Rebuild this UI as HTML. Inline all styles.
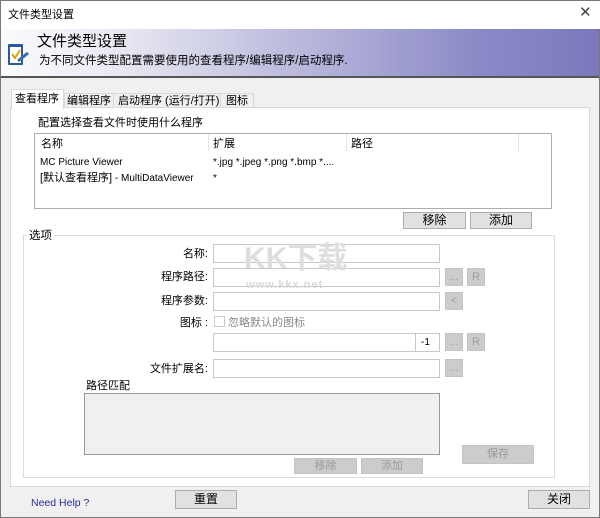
<!DOCTYPE html><html><head><meta charset="utf-8"><style>
*{margin:0;padding:0;box-sizing:border-box}
body{width:600px;height:518px;background:#f0f0f0;font-family:"Liberation Sans","Noto Sans CJK SC",sans-serif;font-size:11px;color:#000;position:relative;overflow:hidden;border:1px solid #777}
.a{position:absolute}
.t{position:absolute;white-space:nowrap;line-height:12px}
.in{position:absolute;background:#fff;border:1px solid #c8c8c8;height:19px}
.b{position:absolute;background:#e1e1e1;border:1px solid #adadad;text-align:center;line-height:15px;font-size:12px}
.d{position:absolute;background:#cccccc;border:1px solid #c4c4c4;color:#9a9a9a;text-align:center;line-height:16px;font-size:11px}
</style></head><body>
<div class="a" style="left:0;top:0;width:600px;height:28px;background:#fff"></div>
<div class="t" style="left:7px;top:8px;font-size:11px">文件类型设置</div>
<div class="t" style="left:578px;top:6px;font-size:15px;color:#444;font-weight:normal">✕</div>
<div class="a" style="left:0;top:28px;width:598px;height:49px;background:linear-gradient(90deg,#fbfbfd 0%,#e8e8f2 20%,#b9b8dc 50%,#8b89c6 80%,#7b79bc 100%);border-bottom:2px solid #555"></div>
<svg class="a" style="left:5px;top:40px" width="26" height="28" viewBox="0 0 26 28"><rect x="2" y="3" width="15" height="21" rx="1" fill="#2a5a9a"/><rect x="4" y="6" width="11" height="16" fill="#fff"/><path d="M6 13l3 4 5-8" stroke="#e0a000" stroke-width="2" fill="none"/><path d="M12 20l10-8" stroke="#3a6ab0" stroke-width="3"/></svg>
<div class="t" style="left:36px;top:33px;font-size:15px;line-height:16px">文件类型设置</div>
<div class="t" style="left:38px;top:54px;font-size:11.5px">为不同文件类型配置需要使用的查看程序/编辑程序/启动程序.</div>
<div class="a" style="left:9px;top:106px;width:580px;height:380px;background:#fff;border:1px solid #d9d9d9"></div>
<div class="a" style="left:63px;top:92px;width:50px;height:15px;border:1px solid #d9d9d9;border-bottom:none"></div>
<div class="a" style="left:113px;top:92px;width:107px;height:15px;border:1px solid #d9d9d9;border-bottom:none;border-left:none"></div>
<div class="a" style="left:220px;top:92px;width:33px;height:15px;border:1px solid #d9d9d9;border-bottom:none;border-left:none"></div>
<div class="a" style="left:10px;top:88px;width:53px;height:20px;background:#fff;border:1px solid #d9d9d9;border-bottom:none"></div>
<div class="t" style="left:14px;top:92px;font-size:11px">查看程序</div>
<div class="t" style="left:66px;top:94px;font-size:11px">编辑程序</div>
<div class="t" style="left:117px;top:94px;font-size:11px">启动程序 (运行/打开)</div>
<div class="t" style="left:225px;top:94px;font-size:11px">图标</div>
<div class="t" style="left:37px;top:116px">配置选择查看文件时使用什么程序</div>
<div class="a" style="left:33px;top:132px;width:518px;height:76px;background:#fff;border:1px solid #adadad"></div>
<div class="a" style="left:207px;top:133px;width:1px;height:17px;background:#e5e5e5"></div>
<div class="a" style="left:345px;top:133px;width:1px;height:17px;background:#e5e5e5"></div>
<div class="a" style="left:517px;top:133px;width:1px;height:17px;background:#e5e5e5"></div>
<div class="t" style="left:40px;top:137px">名称</div>
<div class="t" style="left:212px;top:137px">扩展</div>
<div class="t" style="left:350px;top:137px">路径</div>
<div class="t" style="left:39px;top:156px;font-size:10px">MC Picture Viewer</div>
<div class="t" style="left:39px;top:171px;font-size:10px"><span style="font-size:11px">[默认查看程序]</span> - MultiDataViewer</div>
<div class="t" style="left:212px;top:156px;font-size:10px">*.jpg *.jpeg *.png *.bmp *....</div>
<div class="t" style="left:212px;top:172px;font-size:10px">*</div>
<div class="b" style="left:402px;top:211px;width:63px;height:17px">移除</div>
<div class="b" style="left:469px;top:211px;width:62px;height:17px">添加</div>
<div class="a" style="left:22px;top:234px;width:532px;height:243px;border:1px solid #dcdcdc"></div>
<div class="t" style="left:26px;top:229px;background:#fff;padding:0 2px;font-size:11.5px">选项</div>
<div class="t" style="left:150px;top:247px;width:57px;text-align:right">名称:</div>
<div class="t" style="left:130px;top:270px;width:77px;text-align:right">程序路径:</div>
<div class="t" style="left:130px;top:294px;width:77px;text-align:right">程序参数:</div>
<div class="t" style="left:150px;top:316px;width:57px;text-align:right">图标 :</div>
<div class="t" style="left:130px;top:362px;width:77px;text-align:right">文件扩展名:</div>
<div class="in" style="left:212px;top:243px;width:227px"></div>
<div class="in" style="left:212px;top:267px;width:227px"></div>
<div class="in" style="left:212px;top:291px;width:227px"></div>
<div class="in" style="left:212px;top:332px;width:203px"></div>
<div class="in" style="left:414px;top:332px;width:25px"><span style="position:absolute;left:5px;top:3px;font-size:10px">-1</span></div>
<div class="in" style="left:212px;top:358px;width:227px"></div>
<div class="d" style="left:444px;top:267px;width:18px;height:18px">...</div>
<div class="d" style="left:466px;top:267px;width:18px;height:18px">R</div>
<div class="d" style="left:444px;top:291px;width:18px;height:18px">&lt;</div>
<div class="d" style="left:444px;top:332px;width:18px;height:18px">...</div>
<div class="d" style="left:466px;top:332px;width:18px;height:18px">R</div>
<div class="d" style="left:444px;top:358px;width:18px;height:18px">...</div>
<div class="a" style="left:213px;top:315px;width:11px;height:11px;border:1px solid #ccc;background:#fff"></div>
<div class="t" style="left:227px;top:316px;color:#888">忽略默认的图标</div>
<div class="t" style="left:85px;top:379px">路径匹配</div>
<div class="a" style="left:83px;top:392px;width:356px;height:62px;background:#f0f0f0;border:1px solid #999"></div>
<div class="d" style="left:461px;top:444px;width:72px;height:19px;line-height:17px">保存</div>
<div class="d" style="left:293px;top:457px;width:63px;height:16px;line-height:14px">移除</div>
<div class="d" style="left:360px;top:457px;width:62px;height:16px;line-height:14px">添加</div>
<div class="t" style="left:243px;top:242px;font-size:30px;line-height:32px;color:#dedede;font-weight:bold">KK下载</div>
<div class="t" style="left:245px;top:278px;font-size:11px;color:#d8d8d8;font-weight:bold;letter-spacing:1px">www.kkx.net</div>
<div class="t" style="left:30px;top:496px;color:#2b2b96;font-size:10.5px">Need Help ?</div>
<div class="b" style="left:174px;top:489px;width:62px;height:19px;line-height:17px">重置</div>
<div class="b" style="left:527px;top:489px;width:62px;height:19px;line-height:17px">关闭</div>
</body></html>
